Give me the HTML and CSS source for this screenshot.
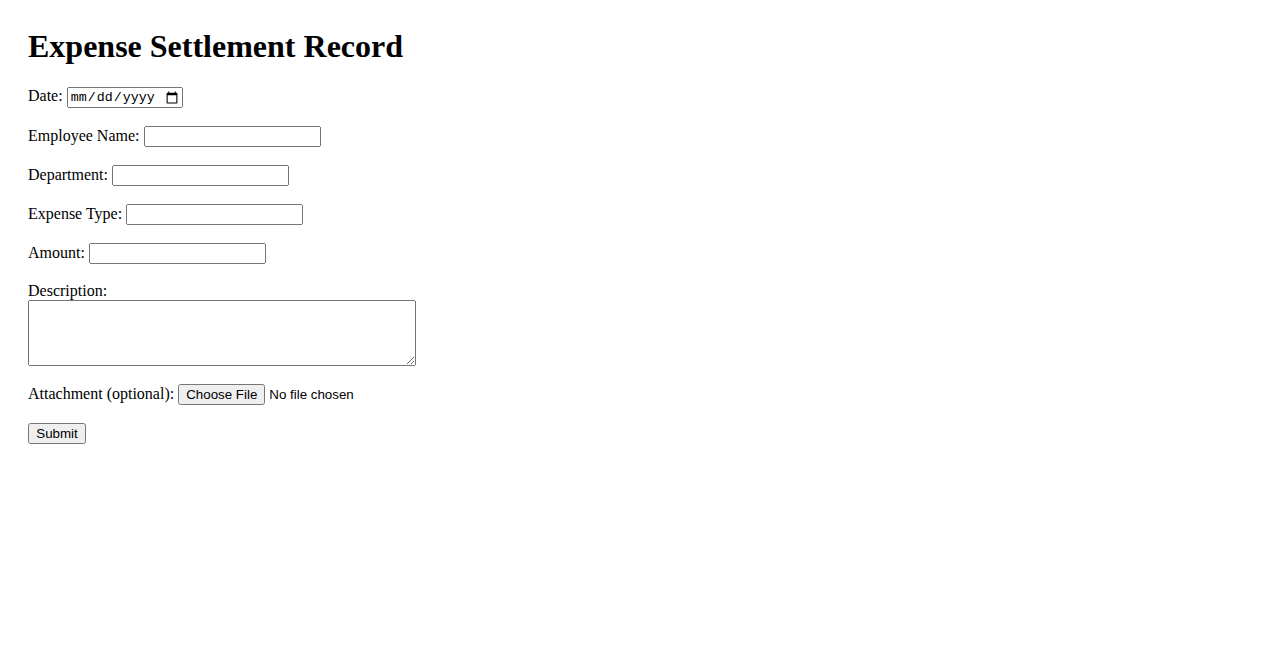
FILE: index.html
```html
<!DOCTYPE html>
<html lang="en">
<head>
    <meta charset="UTF-8">
    <meta name="viewport" content="width=device-width, initial-scale=1.0">
    <title>Expense Settlement Record</title>
    <link rel="stylesheet" href="styles.css">
</head>
<body>
<h1>Expense Settlement Record</h1>

<form class="expense-form">
    <div class="field">
        <label for="date">Date:</label>
        <input type="date" id="date" name="date">
    </div>
    <div class="field">
        <label for="employee">Employee Name:</label>
        <input type="text" id="employee" name="employee">
    </div>
    <div class="field">
        <label for="department">Department:</label>
        <input type="text" id="department" name="department">
    </div>
    <div class="field">
        <label for="expense-type">Expense Type:</label>
        <input type="text" id="expense-type" name="expense_type">
    </div>
    <div class="field">
        <label for="amount">Amount:</label>
        <input type="text" id="amount" name="amount">
    </div>
    <div class="field">
        <label for="description">Description:</label>
        <textarea id="description" name="description" rows="4" cols="50"></textarea>
    </div>
    <div class="field">
        <label for="attachment">Attachment (optional):</label>
        <input type="file" id="attachment" name="attachment">
    </div>
    <button type="submit">Submit</button>
</form>
</body>
</html>
```

FILE: styles.css
```css
body {
    font-family: "Liberation Serif", "Times New Roman", serif;
    font-size: 16px;
    color: #000;
    background-color: #fff;
    padding: 20px;
}

h1 {
    margin-top: 0;
    margin-bottom: 22px;
    font-size: 32px;
}

.field {
    margin-bottom: 18px;
}

input,
button,
textarea {
    font-family: "Liberation Sans", Arial, sans-serif;
    font-size: 13.33px;
}

input[type="text"] {
    width: 177px;
    box-sizing: border-box;
}

input[type="date"] {
    width: 116px;
    box-sizing: border-box;
    font-family: "Liberation Mono", monospace;
}

textarea {
    display: block;
    width: 388px;
    height: 66px;
    box-sizing: border-box;
    font-family: "Liberation Mono", monospace;
}

button {
    width: 58px;
    padding: 1px 6px;
}
```
